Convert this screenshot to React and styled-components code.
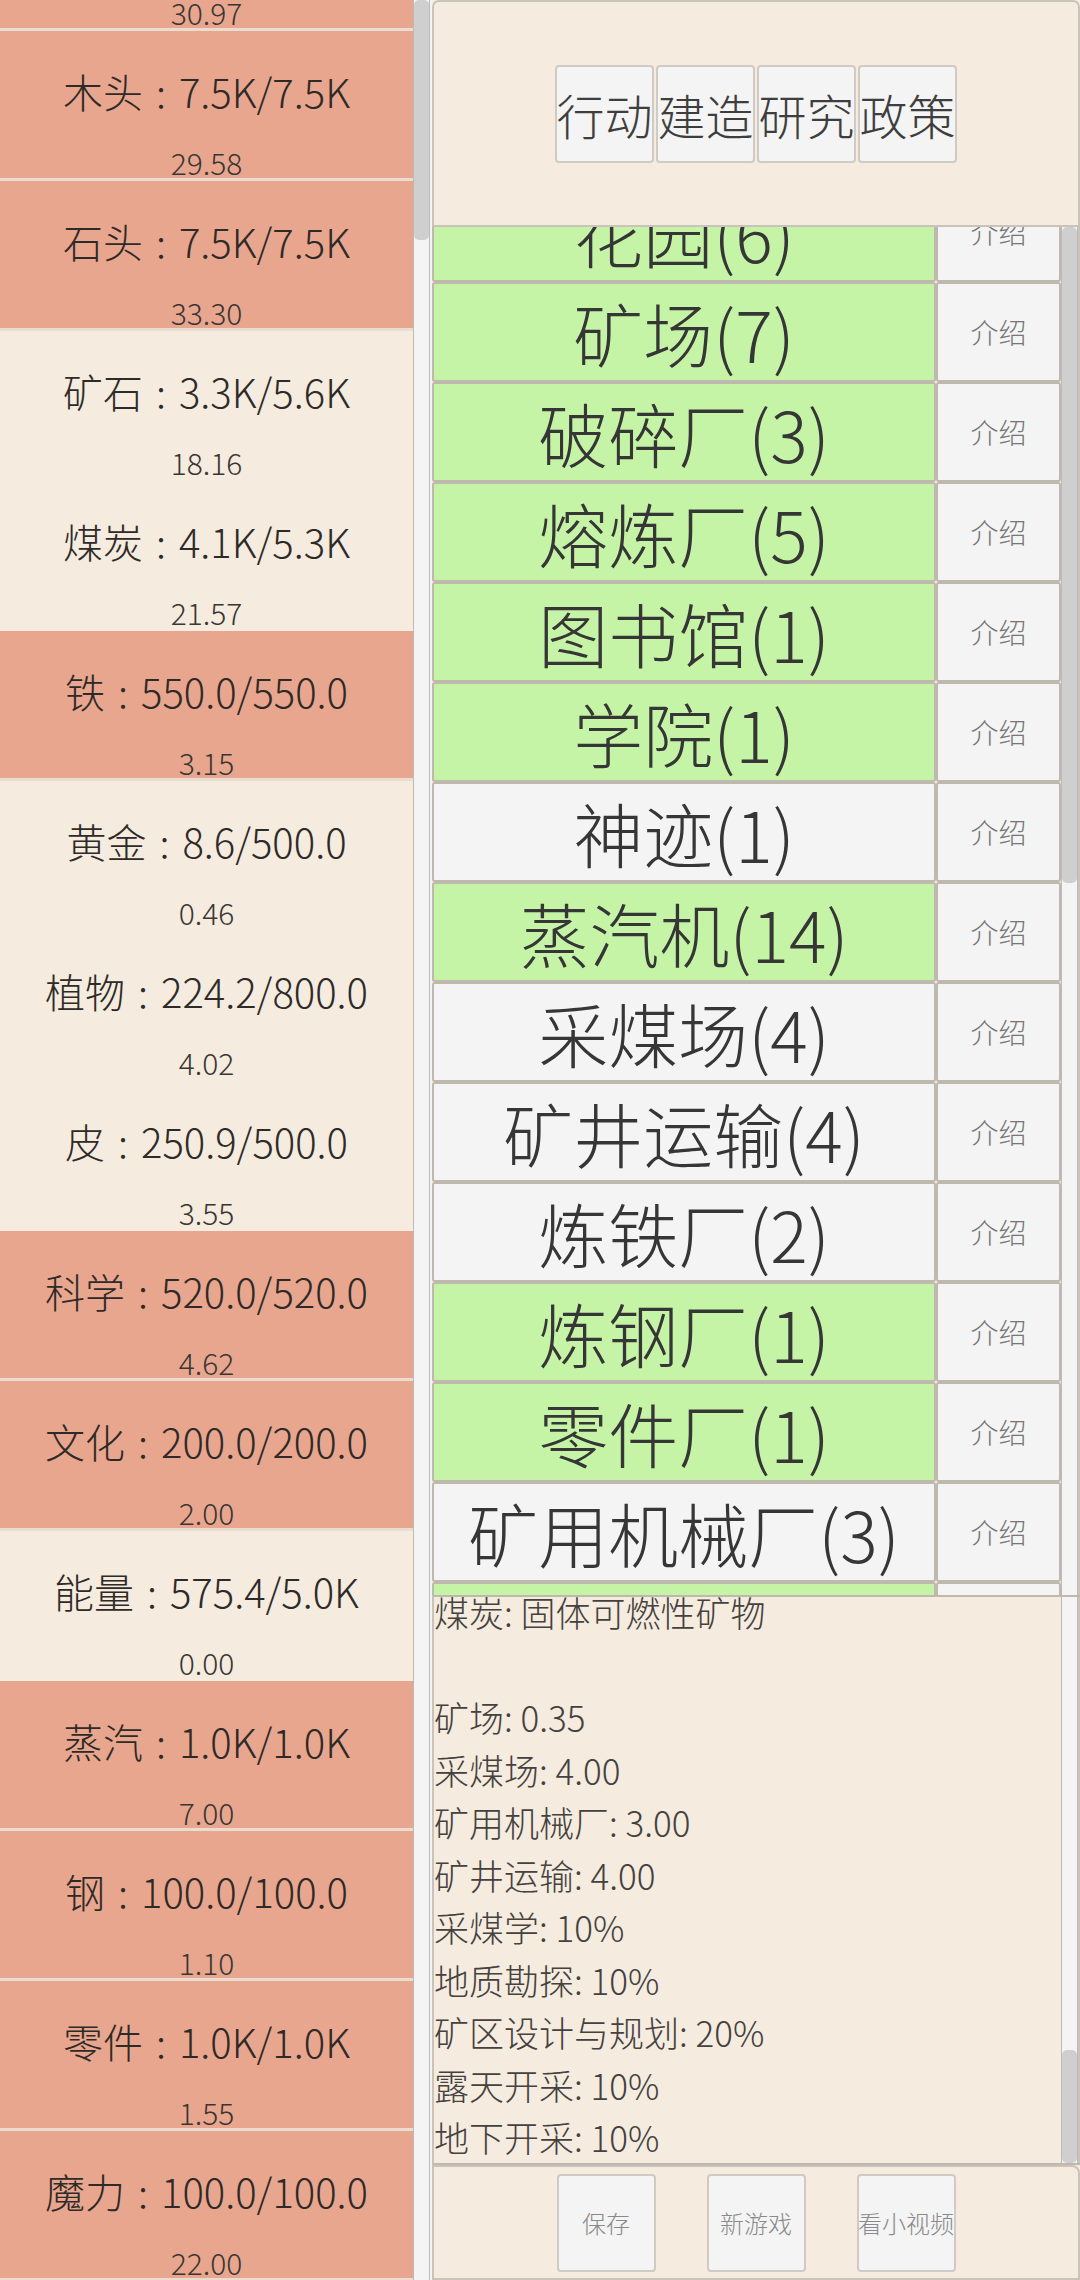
import React from 'react';
import styled, { createGlobalStyle } from 'styled-components';

const GlobalStyle = createGlobalStyle`
  html, body { margin: 0; padding: 0; background: #F5EBDF; }
  body { font-family: "Noto Sans CJK SC", "Noto Sans", sans-serif; font-weight: 300; }
  * { box-sizing: border-box; }
`;

const Screen = styled.div`
  width: 1080px;
  height: 2280px;
  display: flex;
  overflow: hidden;
  background: #F5EBDF;
`;

/* ---------- left resource column ---------- */
const LeftColumn = styled.div`
  width: 432px;
  height: 100%;
  flex-shrink: 0;
  display: flex;
`;

const ResourceViewport = styled.div`
  width: 413px;
  height: 100%;
  overflow: hidden;
`;

const ResourceList = styled.div`
  margin-top: -119px;
  display: flex;
  flex-direction: column;
`;

const ResourceRow = styled.div`
  height: 150px;
  flex-shrink: 0;
  border-bottom: 3px solid ${(p) => (p.$full ? '#EBDCD2' : '#F5EBDF')};
  background: ${(p) => (p.$full ? '#E9A68E' : '#F5EBDF')};
  display: flex;
  flex-direction: column;
  align-items: center;
  padding-top: 30px;
  overflow: hidden;
  color: #2e2a28;
`;

const ResourceMain = styled.div`
  font-size: 40px;
  line-height: 60px;
  white-space: nowrap;
`;

const Colon = styled.span`
  display: inline-block;
  width: 0.9em;
  text-align: center;
`;

const ResourceRate = styled.div`
  margin-top: 21px;
  font-size: 30px;
  line-height: 40px;
  color: #3a3633;
`;

/* ---------- scrollbars ---------- */
const Track = styled.div`
  width: ${(p) => p.$w}px;
  height: 100%;
  flex-shrink: 0;
  background: #F4F4F4;
  border-left: 1px solid #BDBAB6;
  border-right: 1px solid #BDBAB6;
  display: flex;
  flex-direction: column;
`;

const Thumb = styled.div`
  margin-top: ${(p) => p.$top}px;
  height: ${(p) => p.$h}px;
  background: #CFCFCF;
  border-radius: 5px;
  flex-shrink: 0;
`;

const Gap = styled.div`
  width: 2px;
  flex-shrink: 0;
  background: #F4F4F4;
`;

/* ---------- right column ---------- */
const RightColumn = styled.div`
  flex: 1;
  height: 100%;
  display: flex;
  flex-direction: column;
  min-width: 0;
`;

const TabPanel = styled.div`
  height: 227px;
  flex-shrink: 0;
  background: #F5EBDF;
  border: 2px solid #C9C3BA;
  border-radius: 7px 7px 0 0;
  display: flex;
  align-items: center;
  justify-content: center;
  gap: 2px;
`;

const Button = styled.div`
  width: 99px;
  height: 98px;
  flex-shrink: 0;
  background: #F4F4F4;
  border: 2px solid #CFCAC3;
  border-radius: 4px;
  display: flex;
  align-items: center;
  justify-content: center;
  white-space: nowrap;
  overflow: visible;
`;

const TabButton = styled(Button)`
  font-size: 48px;
  color: #3e3e3e;
`;

const BuildingArea = styled.div`
  height: 1368px;
  flex-shrink: 0;
  display: flex;
`;

const BuildingViewport = styled.div`
  flex: 1;
  height: 100%;
  overflow: hidden;
`;

const BuildingList = styled.div`
  margin-top: -45px;
  display: flex;
  flex-direction: column;
`;

const BuildingRow = styled.div`
  height: 100px;
  flex-shrink: 0;
  display: flex;
`;

const NameButton = styled.div`
  flex: 1;
  background: ${(p) => (p.$active ? '#C6F4A7' : '#F4F4F4')};
  border: 2px solid #BEB8AE;
  border-radius: 3px;
  display: flex;
  align-items: center;
  justify-content: center;
  font-size: 70px;
  color: #363636;
  white-space: nowrap;
  overflow: hidden;
`;

const IntroButton = styled.div`
  width: 125px;
  flex-shrink: 0;
  background: #F4F4F4;
  border: 2px solid #BEB8AE;
  border-radius: 3px;
  display: flex;
  align-items: center;
  justify-content: center;
  font-size: 28px;
  color: #767676;
`;

const EdgeSpacer = styled.div`
  width: 2px;
  flex-shrink: 0;
  background: #C9C3BA;
`;

const DescPanel = styled.div`
  height: 570px;
  flex-shrink: 0;
  display: flex;
  background: #F5EBDF;
  border-top: 2px solid #BEB8AE;
  border-bottom: 2px solid #BEB8AE;
  border-left: 2px solid #C9C3BA;
`;

const DescViewport = styled.div`
  flex: 1;
  height: 100%;
  overflow: hidden;
`;

const DescText = styled.div`
  margin-top: -11px;
  font-size: 35px;
  line-height: 52.5px;
  color: #44413e;
  white-space: nowrap;
`;

const DescLine = styled.div`
  height: 52.5px;
`;

const BottomPanel = styled.div`
  flex: 1;
  background: #F5EBDF;
  border: 2px solid #C9C3BA;
  border-radius: 0 8px 0 0;
  display: flex;
  align-items: center;
  justify-content: center;
  gap: 51px;
`;

const BottomButton = styled(Button)`
  font-size: 24px;
  color: #8a8a8a;
`;

const resources = [
  ['食物', '7.5K/7.5K', '30.97', true],
  ['木头', '7.5K/7.5K', '29.58', true],
  ['石头', '7.5K/7.5K', '33.30', true],
  ['矿石', '3.3K/5.6K', '18.16', false],
  ['煤炭', '4.1K/5.3K', '21.57', false],
  ['铁', '550.0/550.0', '3.15', true],
  ['黄金', '8.6/500.0', '0.46', false],
  ['植物', '224.2/800.0', '4.02', false],
  ['皮', '250.9/500.0', '3.55', false],
  ['科学', '520.0/520.0', '4.62', true],
  ['文化', '200.0/200.0', '2.00', true],
  ['能量', '575.4/5.0K', '0.00', false],
  ['蒸汽', '1.0K/1.0K', '7.00', true],
  ['钢', '100.0/100.0', '1.10', true],
  ['零件', '1.0K/1.0K', '1.55', true],
  ['魔力', '100.0/100.0', '22.00', true],
];

const buildings = [
  ['花园(6)', true],
  ['矿场(7)', true],
  ['破碎厂(3)', true],
  ['熔炼厂(5)', true],
  ['图书馆(1)', true],
  ['学院(1)', true],
  ['神迹(1)', false],
  ['蒸汽机(14)', true],
  ['采煤场(4)', false],
  ['矿井运输(4)', false],
  ['炼铁厂(2)', false],
  ['炼钢厂(1)', true],
  ['零件厂(1)', true],
  ['矿用机械厂(3)', false],
  ['', true],
];

const descLines = [
  '煤炭: 固体可燃性矿物',
  '',
  '矿场: 0.35',
  '采煤场: 4.00',
  '矿用机械厂: 3.00',
  '矿井运输: 4.00',
  '采煤学: 10%',
  '地质勘探: 10%',
  '矿区设计与规划: 20%',
  '露天开采: 10%',
  '地下开采: 10%',
];

export default function App() {
  return (
    <>
      <GlobalStyle />
      <Screen>
        <LeftColumn>
          <ResourceViewport>
            <ResourceList>
              {resources.map(([name, amount, rate, full]) => (
                <ResourceRow key={name} $full={full}>
                  <ResourceMain>
                    {name}
                    <Colon>:</Colon>
                    {amount}
                  </ResourceMain>
                  <ResourceRate>{rate}</ResourceRate>
                </ResourceRow>
              ))}
            </ResourceList>
          </ResourceViewport>
          <Track $w={17}>
            <Thumb $top={0} $h={240} />
          </Track>
          <Gap />
        </LeftColumn>

        <RightColumn>
          <TabPanel>
            {['行动', '建造', '研究', '政策'].map((t) => (
              <TabButton key={t}>{t}</TabButton>
            ))}
          </TabPanel>

          <BuildingArea>
            <BuildingViewport>
              <BuildingList>
                {buildings.map(([name, active], i) => (
                  <BuildingRow key={i}>
                    <NameButton $active={active}>{name}</NameButton>
                    <IntroButton>介绍</IntroButton>
                  </BuildingRow>
                ))}
              </BuildingList>
            </BuildingViewport>
            <Track $w={17}>
              <Thumb $top={0} $h={656} />
            </Track>
            <EdgeSpacer />
          </BuildingArea>

          <DescPanel>
            <DescViewport>
              <DescText>
                {descLines.map((l, i) => (
                  <DescLine key={i}>{l || '\u00a0'}</DescLine>
                ))}
              </DescText>
            </DescViewport>
            <Track $w={17}>
              <Thumb $top={453} $h={113} />
            </Track>
            <EdgeSpacer />
          </DescPanel>

          <BottomPanel>
            <BottomButton>保存</BottomButton>
            <BottomButton>新游戏</BottomButton>
            <BottomButton>看小视频</BottomButton>
          </BottomPanel>
        </RightColumn>
      </Screen>
    </>
  );
}
